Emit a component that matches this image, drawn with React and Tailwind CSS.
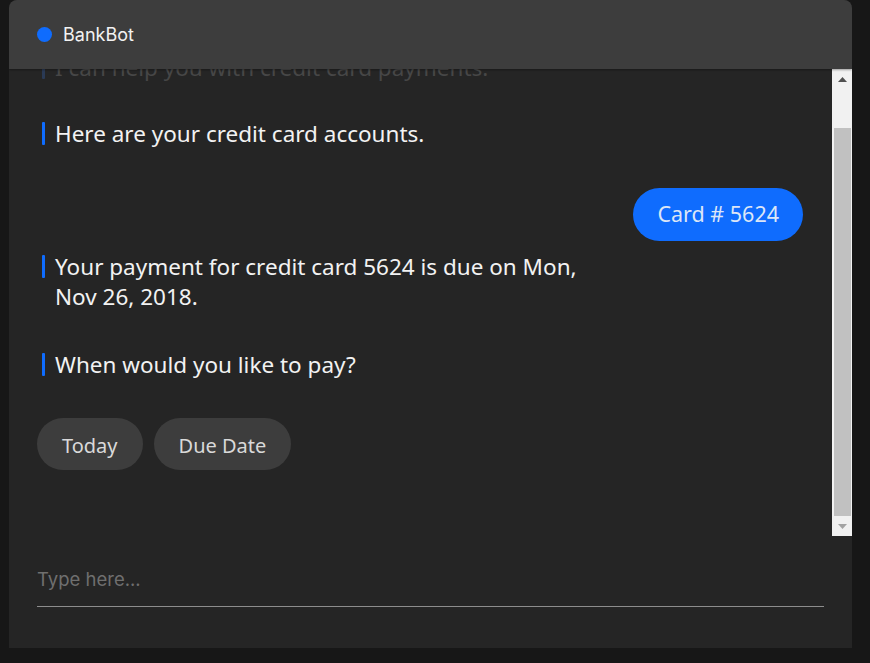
import React from "react";

const font = { fontFamily: '"Noto Sans", "Open Sans", sans-serif' };

function BotMsg({ children, faded }) {
  return (
    <div className="flex pl-[5px]">
      <div
        className={
          "w-[3px] h-[23px] mt-[3px] rounded-[1px] shrink-0 " +
          (faded ? "bg-[#2a3a55]" : "bg-[#0f6cfe]")
        }
      />
      <div
        className={
          "ml-[10px] text-[22.5px] leading-[30px] " +
          (faded ? "text-[#474747]" : "text-[#f2f2f2]")
        }
      >
        {children}
      </div>
    </div>
  );
}

export default function App() {
  return (
    <div className="w-[870px] h-[663px] bg-[#171717] overflow-hidden" style={font}>
      <div className="ml-[9px] w-[843px] h-[648px] bg-[#252525] rounded-t-[8px] flex flex-col overflow-hidden">
        {/* Header */}
        <div className="h-[69px] shrink-0 bg-[#3d3d3d] flex items-center pl-[28px] relative z-10 shadow-[0_1px_2px_rgba(0,0,0,0.35)]">
          <div className="w-[15px] h-[15px] rounded-full bg-[#0f6cfe]" />
          <span
            className="ml-[11px] text-[18px] text-[#f2f2f2]"
            style={{ fontFamily: 'Inter, "Noto Sans", sans-serif' }}
          >
            BankBot
          </span>
        </div>

        {/* Messages + scrollbar */}
        <div className="flex h-[467px] shrink-0">
          <div className="flex-1 overflow-hidden pl-[28px] pr-[29px]">
            <div className="mt-[-16px]">
              <BotMsg faded>I can help you with credit card payments.</BotMsg>
            </div>
            <div className="mt-[36px]">
              <BotMsg>Here are your credit card accounts.</BotMsg>
            </div>
            <div className="mt-[39px] flex justify-end">
              <div className="h-[53px] px-[24px] rounded-full bg-[#0f6cfe] text-[#dce6f7] text-[21.5px] flex items-center">
                Card # 5624
              </div>
            </div>
            <div className="mt-[11px]">
              <BotMsg>
                Your payment for credit card 5624 is due on Mon,
                <br />
                Nov 26, 2018.
              </BotMsg>
            </div>
            <div className="mt-[38px]">
              <BotMsg>When would you like to pay?</BotMsg>
            </div>
            <div className="mt-[38px] flex gap-[11px]">
              <div className="h-[52px] px-[25px] rounded-full bg-[#3d3d3d] text-[#d9d9d9] text-[20px] flex items-center pt-[3px]">
                Today
              </div>
              <div className="h-[52px] px-[25px] rounded-full bg-[#3d3d3d] text-[#d9d9d9] text-[20px] flex items-center pt-[3px]">
                Due Date
              </div>
            </div>
          </div>

          {/* Scrollbar */}
          <div className="w-[20px] shrink-0 bg-[#f1f1f1] flex flex-col items-center">
            <div className="h-[20px] w-full flex items-center justify-center">
              <svg width="9" height="5" viewBox="0 0 9 5">
                <polygon points="0,5 9,5 4.5,0" fill="#505050" />
              </svg>
            </div>
            <div className="mt-[39px] w-[17px] h-[388px] bg-[#c1c1c1]" />
            <div className="flex-1 w-full flex items-center justify-center">
              <svg width="9" height="5" viewBox="0 0 9 5">
                <polygon points="0,0 9,0 4.5,5" fill="#a3a3a3" />
              </svg>
            </div>
          </div>
        </div>

        {/* Input */}
        <div className="px-[28px] pt-[31px]">
          <input
            className="w-full block bg-transparent outline-none text-[18.5px] leading-[24px] h-[24px] pb-0 text-[#f2f2f2] placeholder:text-[#6f6f6f]"
            placeholder="Type here..."
            style={{ fontFamily: 'Inter, "Noto Sans", sans-serif' }}
          />
          <div className="mt-[15px] h-px bg-[#8d8d8d]" />
        </div>
      </div>
    </div>
  );
}
